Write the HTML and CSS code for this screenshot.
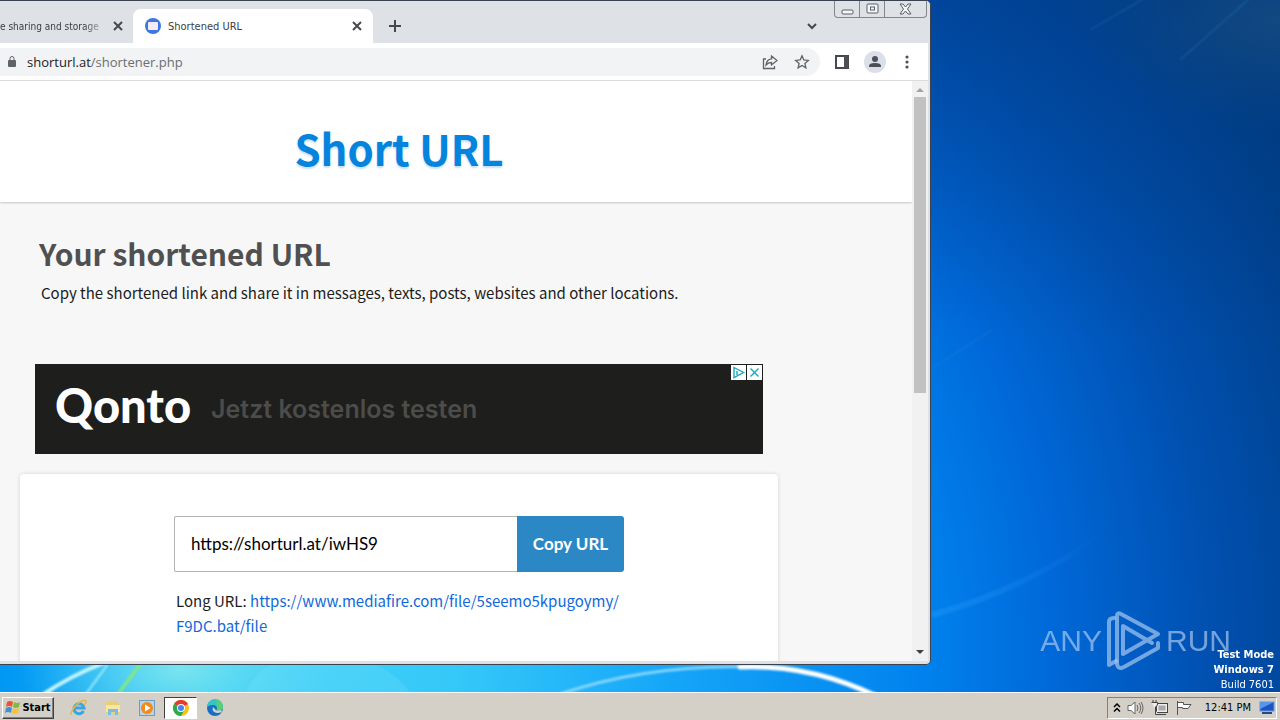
FILE: index.html
```html
<!DOCTYPE html>
<html lang="en">
<head>
<meta charset="utf-8">
<title>Shortened URL</title>
<link rel="stylesheet" href="styles.css">
</head>
<body>
<main class="desktop">
  <svg class="wallpaper" viewBox="0 0 1280 692" preserveAspectRatio="xMidYMax slice" aria-hidden="true">
    <defs>
      <radialGradient id="sky" gradientUnits="userSpaceOnUse" cx="330" cy="650" r="1100">
        <stop offset="0" stop-color="#40d0f8"/><stop offset=".12" stop-color="#34c8f8"/>
        <stop offset=".32" stop-color="#14a4f8"/><stop offset=".54" stop-color="#0082ee"/>
        <stop offset=".66" stop-color="#0068d8"/><stop offset=".8" stop-color="#0050b0"/>
        <stop offset=".98" stop-color="#003c82"/>
      </radialGradient>
      <radialGradient id="glow"><stop offset="0" stop-color="#8cecec" stop-opacity=".8"/><stop offset="1" stop-color="#60e0f0" stop-opacity="0"/></radialGradient>
      <radialGradient id="dusk"><stop offset="0" stop-color="#184c80" stop-opacity=".8"/><stop offset="1" stop-color="#104880" stop-opacity="0"/></radialGradient>
      <linearGradient id="left" x1="0" x2="1"><stop offset="0" stop-color="#0098f4"/><stop offset="1" stop-color="#0098f4" stop-opacity="0"/></linearGradient>
      <linearGradient id="shade" x1="0" y1="0" x2="0" y2="1"><stop offset="0" stop-color="#003c88" stop-opacity=".5"/><stop offset="1" stop-color="#003c88" stop-opacity="0"/></linearGradient>
      <linearGradient id="ray" x1="0" x2="1"><stop offset="0" stop-color="#30a0ff" stop-opacity=".35"/><stop offset="1" stop-color="#30a0ff" stop-opacity="0"/></linearGradient>
      <filter id="soft" x="-20%" y="-50%" width="140%" height="200%"><feGaussianBlur stdDeviation="1"/></filter>
    </defs>
    <rect width="1280" height="692" fill="url(#sky)"/>
    <rect width="1280" height="340" fill="url(#shade)"/>
    <rect y="600" width="140" height="92" fill="url(#left)"/>
    <ellipse cx="180" cy="670" rx="160" ry="80" fill="url(#glow)"/>
    <ellipse cx="1280" cy="20" rx="200" ry="110" fill="url(#dusk)"/>
    <path d="M246 692Q260 660 300 655H340Q385 660 410 692Z" fill="#b0f0ff" opacity=".12"/>
    <g fill="none" filter="url(#soft)">
      <path d="M44 694Q70 676 106 662" stroke="#c8f6ff" stroke-width="4"/>
      <path d="M86 694L108 664" stroke="#a0ecff" stroke-width="2"/>
      <path d="M118 694L142 662" stroke="#88e878" stroke-width="3"/>
      <path d="M560 694Q650 664 750 667" stroke="#a0e0ff" stroke-width="3" opacity=".8"/>
      <path d="M740 667Q810 664 876 696" stroke="#fff" stroke-width="5" stroke-linecap="round"/>
      <path d="M932 615Q1030 588 1110 528" stroke="url(#ray)" stroke-width="6"/>
      <path d="M932 368L992 330M1180 60L1250 -2M1090 30L1150 -5" stroke="#4890d0" stroke-width="2" opacity=".2"/>
    </g>
  </svg>

  <aside class="watermark" aria-label="ANY RUN">
    <span>ANY</span>
    <svg viewBox="0 0 56 62" width="56" height="62" fill="none" stroke="currentColor" stroke-width="4" stroke-linejoin="round" stroke-linecap="round">
      <path d="M8 8Q3 8 3 12V55L10 51"/>
      <path d="M11 54V6Q11 2 15 4L52 24L17 44V16L46 33M11 54Q12 60 18 57L52 38V33"/>
    </svg>
    <span>RUN</span>
  </aside>
  <p class="build"><b>Test Mode</b><b>Windows 7</b><span>Build 7601</span></p>

  <section class="window">
    <header class="tabstrip">
      <div class="tab tab-back"><span class="tab-title">e sharing and storage</span>
        <button class="glyph" aria-label="Close tab"><svg viewBox="0 0 10 10" width="10" height="10"><path d="M1 1L9 9M9 1L1 9"/></svg></button></div>
      <div class="tab tab-active">
        <svg viewBox="0 0 16 16" width="16" height="16"><circle cx="8" cy="8" r="8" fill="#3f76e0"/><rect x="3" y="4" width="10" height="8" rx="1" fill="#f4ecf6"/></svg>
        <span class="tab-title">Shortened URL</span>
        <button class="glyph" aria-label="Close tab"><svg viewBox="0 0 10 10" width="10" height="10"><path d="M1 1L9 9M9 1L1 9"/></svg></button>
      </div>
      <button class="glyph new-tab" aria-label="New tab"><svg viewBox="0 0 12 12" width="12" height="12"><path d="M6 0V12M0 6H12"/></svg></button>
      <button class="glyph tab-search" aria-label="Search tabs"><svg viewBox="0 0 10 8" width="10" height="8"><path d="M1 2L5 6L9 2"/></svg></button>
      <div class="caption">
        <button aria-label="Minimize"><svg viewBox="0 0 13 12" width="13" height="12"><rect x="1" y="7" width="11" height="4" rx="1"/></svg></button>
        <button aria-label="Restore"><svg viewBox="0 0 13 12" width="13" height="12"><rect x="1" y="1" width="11" height="9" rx="1"/><rect x="4.500" y="4" width="4" height="3"/></svg></button>
        <button class="caption-close" aria-label="Close"><svg viewBox="0 0 13 12" width="13" height="12"><path d="M1 1H4L6.500 4L9 1H12L8.500 6L12 11H9L6.500 8L4 11H1L4.500 6Z"/></svg></button>
      </div>
    </header>

    <nav class="toolbar">
      <div class="omnibox">
        <svg viewBox="0 0 10 12" width="10" height="12"><rect x="1" y="4" width="8" height="7" rx="1" fill="#5f6368"/><path d="M3 5V2.500a2 2 0 0 1 4 0V5" fill="none" stroke="#5f6368"/></svg>
        <span class="address">shorturl.at<span class="path">/shortener.php</span></span>
        <button class="glyph thin" aria-label="Share"><svg viewBox="0 0 16 16" width="16" height="16"><path d="M4 5H1.500V14.500H12.500V12M9.500 2L15 6.500L9.500 11V8.500Q6 8.500 4 11Q4.500 5.500 9.500 4.800Z"/></svg></button>
        <button class="glyph thin" aria-label="Bookmark"><svg viewBox="0 0 16 16" width="16" height="16"><path d="M8 1.800L9.800 6L14.300 6.400L10.900 9.400L11.900 13.800L8 11.500L4.100 13.800L5.100 9.400L1.700 6.400L6.200 6Z"/></svg></button>
      </div>
      <button class="glyph" aria-label="Side panel"><svg viewBox="0 0 14 14" width="14" height="14"><path d="M1 1H13V13H1ZM10 1V13" /><rect x="9" y="1" width="4" height="12" class="solid"/></svg></button>
      <button class="glyph" aria-label="Profile"><svg viewBox="0 0 22 22" width="22" height="22"><circle cx="11" cy="11" r="11" fill="#dadfe9" stroke="none"/><g class="solid"><circle cx="11" cy="8" r="3"/><path d="M5 16V15Q5 12 11 12T17 15V16Z"/></g></svg></button>
      <button class="glyph menu" aria-label="Menu"><svg viewBox="0 0 4 14" width="4" height="14"><g class="solid"><circle cx="2" cy="2" r="1.600"/><circle cx="2" cy="7" r="1.600"/><circle cx="2" cy="12" r="1.600"/></g></svg></button>
    </nav>

    <div class="viewport">
      <article class="page">
        <header class="site-header"><h1>Short URL</h1></header>
        <div class="column">
          <h2>Your shortened URL</h2>
          <p class="lead">Copy the shortened link and share it in messages, texts, posts, websites and other locations.</p>
          <div class="ad">
            <strong>Qonto</strong><span>Jetzt kostenlos testen</span>
            <div class="ad-tools">
              <button aria-label="Ad choices"><svg viewBox="0 0 15 15" width="15" height="15"><path d="M3 2.500L12.500 7.500L3 12.500ZM6 6V10"/></svg></button>
              <button aria-label="Close ad"><svg viewBox="0 0 15 15" width="15" height="15"><path d="M3.500 3.500L11.500 11.500M11.500 3.500L3.500 11.500"/></svg></button>
            </div>
          </div>
          <section class="card">
            <form class="copy" onsubmit="return false">
              <input type="text" aria-label="Shortened URL" value="https://shorturl.at/iwHS9">
              <button>Copy URL</button>
            </form>
            <p class="long">Long URL: <a href="#">https://www.mediafire.com/file/5seemo5kpugoymy/<wbr>F9DC.bat/file</a></p>
          </section>
        </div>
      </article>
      <div class="scrollbar">
        <svg viewBox="0 0 8 4" width="8" height="4"><path d="M0 4L4 0L8 4Z" fill="#a3a3a3"/></svg>
        <div class="track"><div class="thumb"></div></div>
        <svg viewBox="0 0 8 4" width="8" height="4"><path d="M0 0L4 4L8 0Z" fill="#404040"/></svg>
      </div>
    </div>
  </section>
</main>

<footer class="taskbar">
  <button class="start">
    <svg viewBox="0 0 16 16" width="16" height="16"><path d="M2 2Q5 0 8 2L7 7Q4 5 1 7Z" fill="#e8572c"/><path d="M9 2Q12 4 15 2L14 7Q11 9 8 7Z" fill="#7dbb42"/><path d="M1 8Q4 6 7 8L6 13Q3 11 0 13Z" fill="#3f8fdc"/><path d="M8 8Q11 10 14 8L13 13Q10 15 7 13Z" fill="#f6c431"/></svg>
    Start</button>
  <nav class="launch">
    <button aria-label="Internet Explorer"><svg viewBox="0 0 18 18" width="18" height="18" fill="none"><path d="M13.500 12A5 5 0 1 1 14 9H5" stroke="#3aa5e4" stroke-width="3"/><path d="M2 15.500Q-1 15 5 7.500Q12 0 15.500 1.500Q17 3 14 6" stroke="#e8b83c" stroke-width="1.500"/></svg></button>
    <button aria-label="Explorer"><svg viewBox="0 0 18 18" width="18" height="18"><path d="M2 3H7L8 2H14V5H16V14H2Z" fill="#e9cf73"/><path d="M2 6H16V13H2Z" fill="#f6e8a4"/><path d="M4 16V10H14V16H11V13H7V16Z" fill="#78bde2"/></svg></button>
    <button aria-label="Media Player"><svg viewBox="0 0 18 18" width="18" height="18"><rect x="1.500" y="1.500" width="15" height="15" fill="#b8d4ea" stroke="#6c9cc4"/><circle cx="9" cy="9" r="6" fill="#f28a1c"/><path d="M7 5.500L12.500 9L7 12.500Z" fill="#fff"/></svg></button>
    <button class="running" aria-label="Chrome"><svg viewBox="0 0 18 18" width="18" height="18"><circle cx="9" cy="9" r="8" fill="#fbc116"/><path d="M9 9L2.070 5A8 8 0 0 1 15.930 5Z" fill="#e33b2e"/><path d="M9 9L2.070 5A8 8 0 0 0 9 17Z" fill="#2da94f"/><path d="M9 17L12.500 11L9 9L6 11Z" fill="#2da94f"/><circle cx="9" cy="9" r="4" fill="#fff"/><circle cx="9" cy="9" r="3" fill="#4285f4"/></svg></button>
    <button aria-label="Edge"><svg viewBox="0 0 18 18" width="18" height="18"><circle cx="9" cy="9" r="8" fill="#1570c4"/><path d="M1 8A8 8 0 0 1 17 8Q17 12 12 12Q10 12 11 10Q11 6 7 6Q3 6 1 8Z" fill="#36c3c8"/><path d="M10 1A8 8 0 0 1 17 8Q17 12 12 12Q10 12 11 10Q12 6 10 1Z" fill="#58d070"/><path d="M7 8Q5 13 11 14Q14 14 16 13L15 11Q10 13 9 10Z" fill="#d4d0c8"/></svg></button>
  </nav>
  <div class="tray">
    <svg viewBox="0 0 8 10" width="8" height="10" fill="none" stroke="#000" stroke-width="1.500"><path d="M1 4L4 1L7 4M1 8.500L4 5.500L7 8.500"/></svg>
    <svg viewBox="0 0 18 16" width="18" height="16" fill="#fff" stroke="#666"><path d="M1 5.500H4L8 2V14L4 10.500H1Z"/><path d="M10 5Q12 8 10 11M12 3Q15.500 8 12 13M14 2Q18 8 14 14" fill="none"/></svg>
    <svg viewBox="0 0 18 16" width="18" height="16" fill="#eee" stroke="#444"><rect x="5.500" y="3.500" width="11" height="9"/><path d="M7 14.500H15M2 0V2M5 0V2M.500 2.500H6.500V5L4.500 7V14.500H7"/><rect x="7.500" y="5.500" width="7" height="5" fill="#aaa" stroke="none"/></svg>
    <svg viewBox="0 0 18 16" width="18" height="16" fill="#fff" stroke="#555"><path d="M2.500 1V15M2.500 2.500H8.500V4.500H16L13 8.500H7.500V7.500H2.500Z"/></svg>
    <time>12:41 PM</time>
    <svg viewBox="0 0 16 14" width="16" height="14"><rect x="1" y="1" width="14" height="9" fill="#1d55c0" stroke="#6b92cc"/><path d="M1 1H15L1 8Z" fill="#5a94ea"/><rect x="3" y="11" width="10" height="2" fill="#234a90"/></svg>
  </div>
</footer>
</body>
</html>
```

FILE: styles.css
```css
* { box-sizing: border-box; }

body {
  margin: 0;
  height: 100vh;
  display: flex;
  flex-direction: column;
  overflow: hidden;
  font-family: "DejaVu Sans Condensed", "DejaVu Sans", sans-serif;
  font-size: 11px;
}

h1, h2, p { margin: 0; }
svg { display: block; flex: none; }

button {
  border: 0;
  padding: 0;
  background: none;
  font: inherit;
  color: inherit;
  display: flex;
  align-items: center;
  justify-content: center;
}

.desktop { flex: 1; min-height: 0; position: relative; overflow: hidden; background: #0068d8; }
.wallpaper { position: absolute; inset: 0; width: 100%; height: 100%; }

.watermark {
  position: absolute;
  right: 49px;
  bottom: 20px;
  display: flex;
  align-items: center;
  gap: 4px;
  color: rgba(165, 200, 240, .7);
  font: 30px/62px "Liberation Sans", sans-serif;
}

.build {
  position: absolute;
  right: 6px;
  bottom: 0;
  display: flex;
  flex-direction: column;
  text-align: right;
  color: #fff;
  line-height: 15px;
}

/* Browser window */
.window {
  position: absolute;
  left: 0;
  top: 0;
  right: 349px;
  bottom: 27px;
  display: flex;
  flex-direction: column;
  background: #fff;
  border: 1px solid #3a424e;
  border-left: 0;
  border-radius: 0 5px 5px 0;
  box-shadow: inset -3px -3px #dee1e6;
  padding: 0 2px 3px 0;
  overflow: hidden;
}

.tabstrip { display: flex; align-items: flex-end; height: 42px; background: #dee1e6; color: #3c4043; flex: none; }
.tab { display: flex; align-items: center; height: 34px; }
.tab-back { width: 133px; padding-right: 10px; justify-content: space-between; }
.tab-back .tab-title {
  white-space: nowrap;
  font-size: 10px;
  -webkit-mask-image: linear-gradient(90deg, #000 85%, rgba(0, 0, 0, .4));
  mask-image: linear-gradient(90deg, #000 85%, rgba(0, 0, 0, .4));
}
.tab-active { width: 240px; padding: 0 11px 0 12px; gap: 7px; background: #fff; border-radius: 8px 8px 0 0; }
.tab-active .tab-title { flex: 1; }

.glyph svg { fill: none; stroke: #45494d; stroke-width: 2; }
.glyph.thin svg { stroke: #5f6368; stroke-width: 1.3; }
.glyph .solid { fill: #4d5156; stroke: none; }

.new-tab { width: 44px; height: 34px; }
.tab-search { margin-left: auto; width: 44px; height: 34px; }

.caption { align-self: flex-start; display: flex; height: 17px; border: 1px solid #82868e; border-top: 0; border-radius: 0 0 4px 4px; margin: 0 1px 0 0; }
.caption button { width: 25px; border-right: 1px solid #82868e; }
.caption .caption-close { width: 41px; border: 0; }
.caption svg { fill: #f4f5f8; stroke: #5a5f68; }

.toolbar { display: flex; align-items: center; gap: 15px; height: 38px; padding: 0 19px 0 0; background: #fff; border-bottom: 1px solid #dadce0; flex: none; }
.toolbar .menu { margin-left: 4px; }
.omnibox { flex: 1; display: flex; align-items: center; gap: 16px; height: 28px; padding: 0 10px 0 7px; background: #f1f3f4; border-radius: 0 14px 14px 0; }
.address { flex: 1; margin-left: -6px; font: 13px/20px "Open Sans", sans-serif; color: #202124; }
.path { color: #6a6e73; }

.viewport { flex: 1; min-height: 0; display: flex; background: #f7f7f7; }
.page { flex: 1; min-width: 0; overflow: hidden; color: #1c1c1c; font-family: "Noto Sans CJK SC", sans-serif; }

.scrollbar { width: 16px; display: flex; flex-direction: column; align-items: center; gap: 5px; padding: 7px 0; background: #f1f1f1; }
.track { flex: 1; width: 12px; }
.thumb { height: 54%; background: #c1c1c1; }

/* Page content */
.site-header { padding: 37px 116px 24px 2px; background: #fff; box-shadow: 0 1px 2px rgba(0, 0, 0, .2); text-align: center; }
h1 { font-size: 42px; line-height: 60px; font-weight: 700; color: #0484dc; text-shadow: 0 2px 2px #c8e0f4; }

.column { margin: 0 134px 0 20px; }
h2 { padding: 28px 0 0 19px; font-size: 30px; line-height: 46px; font-weight: 700; color: #505050; }
.lead { padding: 4px 0 0 21px; font-size: 15px; line-height: 26px; white-space: nowrap; }

.ad { position: relative; display: flex; align-items: center; gap: 20px; height: 90px; margin: 58px 15px 20px; padding: 0 20px; background: #1e1e1c; color: #fff; }
.ad strong { padding-bottom: 8px; font: 900 47px/50px Lato, sans-serif; }
.ad span { font: 600 25px/32px Inter, sans-serif; color: #4c4c4a; }
.ad-tools { position: absolute; top: 1px; right: 1px; display: flex; gap: 1px; }
.ad-tools button { background: #fff; }
.ad-tools svg { fill: none; stroke: #18a8bc; stroke-width: 1.4; }

.card { padding: 42px 154px; height: 400px; background: #fff; border-radius: 4px; box-shadow: 0 0 4px rgba(0, 0, 0, .15); }
.copy { display: flex; height: 56px; }
.copy input { flex: 1; min-width: 0; padding: 0 16px; border: 1px solid #b4b4b4; border-right: 0; border-radius: 2px 0 0 2px; background: #fff; font: 17px/24px Lato, sans-serif; color: #000; }
.copy button { width: 107px; border-radius: 0 3px 3px 0; background: #2c87c5; color: #fff; font: 700 17px/24px Lato, sans-serif; }
.long { padding: 16px 0 0 2px; font-size: 15px; line-height: 25px; }
.long a { color: #1268dc; text-decoration: none; }

/* Taskbar */
.taskbar { display: flex; align-items: center; height: 28px; padding: 2px 3px 0 2px; background: #d4d0c8; border-top: 1px solid #fff; flex: none; }
.start { width: 52px; height: 22px; gap: 1px; background: #d4d0c8; border: 1px solid; border-color: #fff #404040 #404040 #fff; box-shadow: inset -1px -1px #808080; color: #000; font-weight: 700; }
.launch { display: flex; gap: 1px; margin-left: 8px; }
.launch button { width: 33px; height: 22px; }
.launch .running { background: #fff; border: 1px solid; border-color: #404040 #fff #fff #404040; }
.tray { display: flex; align-items: center; gap: 6px; height: 22px; margin-left: auto; padding: 0 1px 0 5px; border: 1px solid; border-color: #808080 #fff #fff #808080; }
.tray time { padding: 0 2px 0 6px; }
```
